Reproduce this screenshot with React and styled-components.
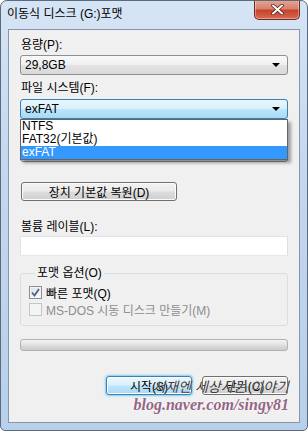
import React from 'react';
import styled, { createGlobalStyle } from 'styled-components';

const GlobalStyle = createGlobalStyle`
    html, body {
        margin: 0;
        padding: 0;
        background: #ffffff;
    }
    body {
        font-family: "Liberation Sans", "Noto Sans CJK KR", sans-serif;
        font-size: 12px;
        color: #000;
    }
`;

const Window = styled.div`
    position: relative;
    box-sizing: border-box;
    width: 308px;
    height: 431px;
    display: flex;
    flex-direction: column;
    padding: 0 7px 7px 7px;
    border: 1px solid #5a6b80;
    border-radius: 7px 7px 5px 5px;
    background: linear-gradient(180deg, #d6e5f5 0%, #c3d7ee 40%, #b9d0ea 100%);
    overflow: hidden;
`;

const TitleBar = styled.div`
    height: 28px;
    display: flex;
    justify-content: space-between;
    align-items: flex-start;
`;

const Title = styled.span`
    line-height: 28px;
    margin-top: -1px;
    margin-left: -1px;
    white-space: nowrap;
`;

const CloseButton = styled.div`
    box-sizing: border-box;
    width: 46px;
    height: 20px;
    margin-top: -1px;
    display: flex;
    align-items: center;
    justify-content: center;
    border: 1px solid #6d2a22;
    border-top: none;
    border-radius: 0 0 5px 5px;
    background: linear-gradient(180deg, #e8a593 0%, #d7826d 45%, #c6432d 55%, #d66a4f 100%);
    box-shadow: inset 0 0 0 1px rgba(255, 255, 255, 0.35);
`;

const Content = styled.div`
    flex: 1;
    display: flex;
    flex-direction: column;
    padding: 0 11px;
    border: 1px solid #8497ad;
    background: #f0f0f0;
`;

const Label = styled.div`
    line-height: 14px;
    min-height: 14px;
    margin-top: ${p => p.$top}px;
    padding-left: 1px;
    white-space: nowrap;
`;

const Combo = styled.div`
    position: relative;
    box-sizing: border-box;
    height: 20px;
    margin-top: ${p => p.$top}px;
    display: flex;
    align-items: center;
    padding: 0 4px;
    border: 1px solid ${p => (p.$active ? '#3c7fb1' : '#8e8f8f')};
    border-radius: 3px;
    background: ${p => p.$active
        ? 'linear-gradient(180deg, #eaf6fd 0%, #d9f0fc 49%, #bee6fd 51%, #a7d9f5 100%)'
        : 'linear-gradient(180deg, #fafafa 0%, #f0f0f0 49%, #e3e3e3 51%, #d9d9d9 100%)'};
`;

const Arrow = styled.span`
    margin-left: auto;
    margin-right: 3px;
    width: 0;
    height: 0;
    border-left: 4px solid transparent;
    border-right: 4px solid transparent;
    border-top: 4px solid #000;
`;

const ListHolder = styled.div`
    position: relative;
    z-index: 2;
`;

const DropList = styled.ul`
    position: absolute;
    left: 0;
    top: 0;
    width: 268px;
    box-sizing: border-box;
    margin: 0;
    padding: 0;
    list-style: none;
    border: 1px solid #646464;
    background: #fff;
    box-shadow: 3px 3px 3px rgba(0, 0, 0, 0.35);
`;

const Item = styled.li`
    height: 13px;
    line-height: 13px;
    padding-left: 1px;
    color: ${p => (p.$selected ? '#fff' : '#000')};
    background: ${p => (p.$selected ? '#3399ff' : 'transparent')};
`;

const Button = styled.div`
    box-sizing: border-box;
    width: ${p => p.$w}px;
    height: 19px;
    margin-top: ${p => p.$top || 0}px;
    margin-left: ${p => p.$left || 0}px;
    display: flex;
    align-items: center;
    justify-content: center;
    border: 1px solid ${p => (p.$default ? '#3c7fb1' : '#707070')};
    border-radius: 3px;
    background: ${p => p.$default
        ? 'linear-gradient(180deg, #eaf6fd 0%, #d9f0fc 49%, #bee6fd 51%, #a7d9f5 100%)'
        : 'linear-gradient(180deg, #f2f2f2 0%, #ebebeb 49%, #dddddd 51%, #cfcfcf 100%)'};
    box-shadow: ${p => (p.$default ? '0 0 2px 1px #7fcdf3, inset 0 0 0 1px #ffffff' : 'inset 0 0 0 1px #fcfcfc')};
    white-space: nowrap;
`;

const TextBox = styled.div`
    box-sizing: border-box;
    height: 20px;
    margin-top: 2px;
    border: 1px solid #abadb3;
    border-top-color: #e2e3ea;
    border-left-color: #e2e3ea;
    border-right-color: #dbdfe6;
    border-bottom-color: #e3e9ef;
    background: #fff;
`;

const Group = styled.fieldset`
    margin: 10px 0 0 0;
    padding: 4px 0 9px 8px;
    height: 60px;
    box-sizing: border-box;
    border: 1px solid #d5dfe5;
    border-radius: 3px;
`;

const Legend = styled.legend`
    padding: 0 2px;
    margin-left: 6px;
    line-height: 14px;
`;

const CheckRow = styled.div`
    display: flex;
    align-items: center;
    height: 17px;
    gap: 4px;
    color: ${p => (p.$disabled ? '#8d8d8d' : '#000')};
    white-space: nowrap;
`;

const Box = styled.span`
    box-sizing: border-box;
    width: 13px;
    height: 13px;
    display: flex;
    align-items: center;
    justify-content: center;
    border: 1px solid ${p => (p.$disabled ? '#c5c5c5' : '#8f8f8f')};
    background: ${p => (p.$disabled
        ? '#f4f4f4'
        : 'linear-gradient(135deg, #dcdcdc 0%, #f4f4f4 60%, #ffffff 100%)')};
    box-shadow: inset 0 0 0 1px #f4f4f4;
`;

const Progress = styled.div`
    height: 12px;
    box-sizing: border-box;
    margin-top: 13px;
    border: 1px solid #b2b2b2;
    border-radius: 3px;
    background: linear-gradient(180deg, #f3f3f3 0%, #e6e6e6 40%, #d6d6d6 70%, #cccccc 100%);
`;

const ButtonRow = styled.div`
    display: flex;
    justify-content: flex-end;
    gap: 10px;
    margin-top: 25px;
`;

const Watermark = styled.div`
    position: absolute;
    left: 112px;
    top: 378px;
    display: flex;
    flex-direction: column;
    align-items: flex-end;
    width: 176px;
    pointer-events: none;
`;

const MarkLine = styled.div`
    font-style: italic;
    font-size: 14px;
    line-height: 17px;
    color: #3a3a3a;
    white-space: nowrap;
    text-shadow: 0 0 1px #ffffff;
`;

const MarkUrl = styled.div`
    font-family: "Liberation Serif", serif;
    font-style: italic;
    font-weight: bold;
    font-size: 16px;
    line-height: 18px;
    color: #946584;
    white-space: nowrap;
    text-shadow: 0 0 2px #ffffff, 0 0 1px #ffffff;
`;

export default function App() {
    return (
        <>
            <GlobalStyle />
            <Window>
                <TitleBar>
                    <Title>이동식 디스크 (G:)포맷</Title>
                    <CloseButton>
                        <svg width="13" height="11" viewBox="0 0 13 11">
                            <path d="M2 1.5 L11 9.5 M11 1.5 L2 9.5" stroke="#4a1a14" strokeWidth="3.4" strokeLinecap="round" />
                            <path d="M2 1.5 L11 9.5 M11 1.5 L2 9.5" stroke="#ffffff" strokeWidth="2" strokeLinecap="round" />
                        </svg>
                    </CloseButton>
                </TitleBar>
                <Content>
                    <Label $top={8}>용량(P):</Label>
                    <Combo $top={3}>29,8GB<Arrow /></Combo>
                    <Label $top={6}>파일 시스템(F):</Label>
                    <Combo $top={4} $active>exFAT<Arrow /></Combo>
                    <ListHolder>
                        <DropList>
                            <Item>NTFS</Item>
                            <Item>FAT32(기본값)</Item>
                            <Item $selected>exFAT</Item>
                        </DropList>
                    </ListHolder>
                    {/* label and combo hidden behind the open list */}
                    <Label $top={6} />
                    <Combo $top={3}><Arrow /></Combo>
                    <Button $w={156} $top={20} $left={1}>장치 기본값 복원(D)</Button>
                    <Label $top={19}>볼륨 레이블(L):</Label>
                    <TextBox />
                    <Group>
                        <Legend>포맷 옵션(O)</Legend>
                        <CheckRow>
                            <Box>
                                <svg width="9" height="9" viewBox="0 0 9 9">
                                    <path d="M1 4.5 L3.5 7.5 L8 1" fill="none" stroke="#4a5f97" strokeWidth="1.8" />
                                </svg>
                            </Box>
                            빠른 포맷(Q)
                        </CheckRow>
                        <CheckRow $disabled>
                            <Box $disabled />
                            MS-DOS 시동 디스크 만들기(M)
                        </CheckRow>
                    </Group>
                    <Progress />
                    <ButtonRow>
                        <Button $w={86} $default>시작(S)</Button>
                        <Button $w={86}>닫기(C)</Button>
                    </ButtonRow>
                </Content>
                <Watermark>
                    <MarkLine>서재엔 세상사는 이야기</MarkLine>
                    <MarkUrl>blog.naver.com/singy81</MarkUrl>
                </Watermark>
            </Window>
        </>
    );
}
